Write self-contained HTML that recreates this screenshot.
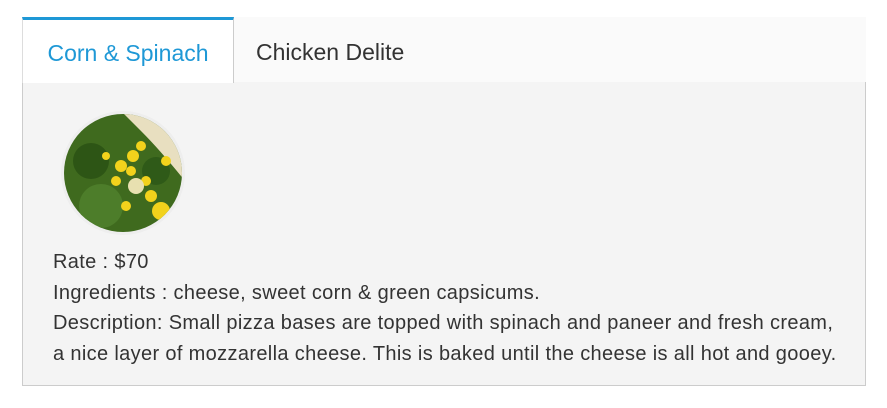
<!DOCTYPE html>
<html><head><style>
html,body{margin:0;padding:0;background:#fff;width:887px;height:408px;overflow:hidden;font-family:"Liberation Sans",sans-serif;}
.wrap{position:absolute;left:22px;top:17px;width:844px;}
.bar{height:65px;background:#fafafa;border-bottom:1px solid #ccc;position:relative;}
.tab{position:absolute;top:0;height:62px;line-height:70px;font-size:23px;color:#333;}
.t1{left:0;width:210px;background:#fff;border-top:3px solid #1e98d6;border-left:1px solid #ddd;border-right:1px solid #ccc;height:63px;line-height:66px;color:#1e98d6;text-align:center;z-index:2;}
.t2{left:234px;}
.panel{position:absolute;top:65px;left:0;width:842px;height:303px;background:#f4f4f4;border:1px solid #ccc;border-top:none;}
.img{position:absolute;left:38px;top:29px;width:124px;height:124px;border-radius:50%;background:#eee;}
.txt{position:absolute;left:30px;top:165px;font-size:20px;letter-spacing:0.35px;line-height:30.5px;color:#333;white-space:nowrap;}
</style></head><body>
<div class="wrap">
<div class="bar"><div class="tab t1">Corn &amp; Spinach</div><div class="tab t2">Chicken Delite</div></div>
<div class="panel">
<div class="img"><svg width="124" height="124" viewBox="0 0 124 124">
<defs><clipPath id="c"><circle cx="62" cy="62" r="59"/></clipPath></defs>
<g clip-path="url(#c)">
<rect width="124" height="124" fill="#3f6a1e"/>
<path d="M60 0 L124 0 L124 70 Q100 40 80 20 Z" fill="#e8dfc0"/>
<circle cx="30" cy="50" r="18" fill="#2d5515"/>
<circle cx="40" cy="95" r="22" fill="#4d7d2a"/>
<circle cx="95" cy="60" r="14" fill="#2f5a18"/>
<g fill="#f2d21c">
<circle cx="72" cy="45" r="6"/><circle cx="80" cy="35" r="5"/><circle cx="60" cy="55" r="6"/>
<circle cx="100" cy="100" r="9"/><circle cx="90" cy="85" r="6"/><circle cx="55" cy="70" r="5"/>
<circle cx="70" cy="60" r="5"/><circle cx="45" cy="45" r="4"/><circle cx="105" cy="50" r="5"/>
<circle cx="65" cy="95" r="5"/><circle cx="85" cy="70" r="5"/>
</g>
<circle cx="75" cy="75" r="8" fill="#e8e0b0"/>
</g></svg></div>
<div class="txt">Rate : $70<br>Ingredients : cheese, sweet corn &amp; green capsicums.<br>Description: Small pizza bases are topped with spinach and paneer and fresh cream,<br>a nice layer of mozzarella cheese. This is baked until the cheese is all hot and gooey.</div>
</div>
</div>
</body></html>
